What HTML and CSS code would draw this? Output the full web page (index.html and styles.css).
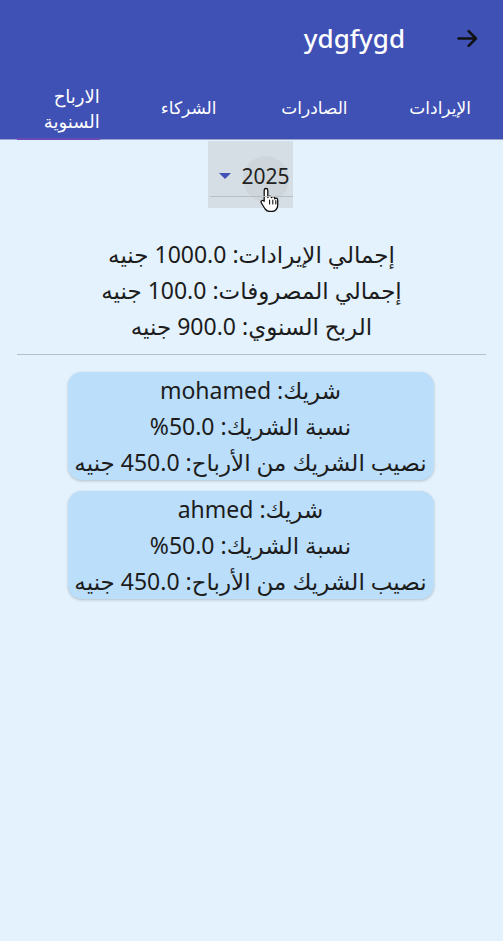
FILE: index.html
```html
<!DOCTYPE html>
<html lang="ar" dir="rtl">
<head>
<meta charset="utf-8">
<link rel="stylesheet" href="styles.css">
</head>
<body>
<header class="appbar">
  <div class="toolbar">
    <span class="back">
      <svg width="27" height="27" viewBox="0 0 24 24"><path d="M4 12h15M13 5.5l6.5 6.5-6.5 6.5" fill="none" stroke="#111" stroke-width="2.3" stroke-linecap="round" stroke-linejoin="round"/></svg>
    </span>
    <h1 class="title">ydgfygd</h1>
  </div>
  <nav class="tabs">
    <div class="tab">الإيرادات</div>
    <div class="tab">الصادرات</div>
    <div class="tab">الشركاء</div>
    <div class="tab active"><span>الارباح<br>السنوية</span></div>
  </nav>
</header>
<main class="content">
  <div class="picker-wrap">
    <div class="picker">
      <span class="ripple"></span>
      <span class="caret"></span>
      <span class="year">2025</span>
      <svg class="cursor" width="22" height="26" viewBox="0 0 22 26"><path d="M7 2.5c1 0 1.8.8 1.8 1.8v7.2c.3-.9 1-1.4 1.8-1.4 1 0 1.7.7 1.8 1.6.3-.6.9-1 1.6-1 1 0 1.7.8 1.7 1.7v.4c.3-.4.8-.6 1.3-.6 1 0 1.7.8 1.7 1.8v5.2c0 3.6-2.6 6.3-6.2 6.3h-1.6c-2.1 0-3.6-.9-4.8-2.5L2.4 17c-.5-.8-.4-1.8.3-2.3.7-.5 1.7-.4 2.3.3l.2.3V4.3C5.2 3.3 6 2.5 7 2.5z" fill="#fff" stroke="#111" stroke-width="1.3" stroke-linejoin="round"/><path d="M10.6 14v4M13.8 14v4M16.8 14.6v3.4" stroke="#111" stroke-width="1.1" stroke-linecap="round"/></svg>
    </div>
  </div>
  <section class="summary">
    <p>إجمالي الإيرادات: 1000.0 جنيه</p>
    <p>إجمالي المصروفات: 100.0 جنيه</p>
    <p>الربح السنوي: 900.0 جنيه</p>
  </section>
  <hr class="divider">
  <div class="cards">
    <div class="card">
      <p>شريك: mohamed</p>
      <p>نسبة الشريك: 50.0%</p>
      <p>نصيب الشريك من الأرباح: 450.0 جنيه</p>
    </div>
    <div class="card">
      <p>شريك: ahmed</p>
      <p>نسبة الشريك: 50.0%</p>
      <p>نصيب الشريك من الأرباح: 450.0 جنيه</p>
    </div>
  </div>
</main>
</body>
</html>
```
FILE: styles.css
```css
* { box-sizing: border-box; }
html, body {
  margin: 0;
  padding: 0;
  height: 100%;
}
body {
  background: #e3f2fd;
  font-family: "Noto Sans", "DejaVu Sans", sans-serif;
  color: #1c1c1c;
}
.appbar {
  background: #3f51b5;
  border-bottom: 1px solid #9aa3c9;
}
.toolbar {
  height: 76px;
  display: flex;
  align-items: center;
  padding-right: 8px;
}
.back {
  width: 56px;
  display: flex;
  justify-content: center;
  align-items: center;
}
.title {
  margin: 0 34px 0 0;
  font-size: 26px;
  font-weight: 500;
  color: #fff;
  direction: ltr;
}
.tabs {
  height: 63px;
  display: grid;
  grid-template-columns: repeat(4, 1fr);
}
.tab {
  display: flex;
  align-items: center;
  justify-content: center;
  color: #fff;
  font-size: 17px;
  line-height: 24px;
  position: relative;
}
.tab.active {
  justify-content: flex-start;
  font-size: 18px;
  line-height: 25px;
}
.tab.active span {
  text-align: right;
  padding-top: 2px;
  margin-right: 26px;
}
.tab.active::after {
  content: "";
  position: absolute;
  bottom: -1px;
  left: 17px;
  width: 83px;
  height: 2px;
  background: #6a4bb6;
}
.content {
  padding: 0 17px;
}
.picker-wrap {
  display: flex;
  justify-content: center;
}
.picker {
  position: relative;
  width: 85px;
  height: 67px;
  margin-top: 1px;
  margin-right: 3px;
  background: #d6dee5;
  display: flex;
  align-items: center;
  justify-content: flex-start;
  direction: ltr;
  padding: 2px 0 0 11px;
  gap: 11px;
}
.picker::after {
  content: "";
  position: absolute;
  left: 2px;
  right: 0;
  top: 55px;
  height: 1px;
  background: #b7bec4;
}
.ripple {
  position: absolute;
  left: 35px;
  top: 15px;
  width: 46px;
  height: 46px;
  border-radius: 50%;
  background: rgba(0,0,0,0.035);
}
.caret {
  width: 0;
  height: 0;
  border-left: 6px solid transparent;
  border-right: 6px solid transparent;
  border-top: 6px solid #3f51b5;
  margin-top: 1px;
}
.year {
  font-size: 21px;
  color: #222;
  position: relative;
}
.cursor {
  position: absolute;
  left: 51px;
  top: 45px;
}
.summary {
  margin-top: 28px;
  text-align: center;
}
.summary p, .card p {
  margin: 0;
  font-size: 23px;
  line-height: 36px;
}
.divider {
  border: 0;
  border-top: 1px solid #b8bfc6;
  margin: 10px 0 0;
}
.cards {
  display: flex;
  flex-direction: column;
  align-items: center;
  gap: 11px;
  margin-top: 17px;
}
.card {
  width: 366px;
  margin-right: 2px;
  background: #bbdefb;
  border-radius: 14px;
  box-shadow: 0 1px 3px rgba(0,0,0,0.22);
  text-align: center;
  overflow: hidden;
  white-space: nowrap;
}
```
